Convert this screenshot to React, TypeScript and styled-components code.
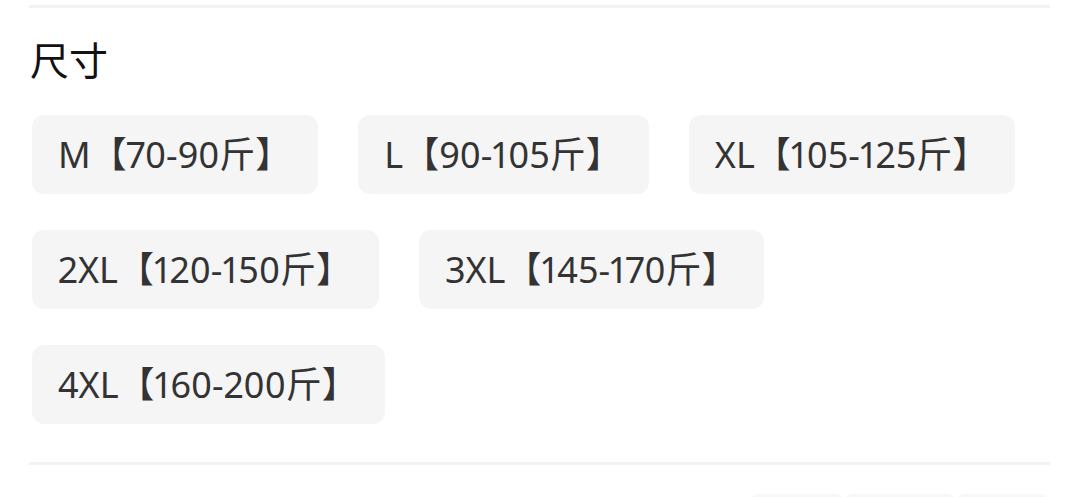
import React from "react";
import styled, { createGlobalStyle } from "styled-components";

const GlobalStyle = createGlobalStyle`
  body {
    margin: 0;
    background: #ffffff;
    font-family: "Noto Sans CJK SC", "Noto Sans", sans-serif;
  }
`;

const Page = styled.div`
  width: 1069px;
  height: 497px;
  overflow: hidden;
  padding: 5px 19px 0 29px;
  box-sizing: border-box;
`;

const Divider = styled.div`
  height: 3px;
  background: #f2f2f2;
`;

const Section = styled.div`
  padding: 30px 0 38px 1px;
`;

const Title = styled.h3`
  margin: 0 0 37px;
  font-size: 39px;
  font-weight: 400;
  line-height: 40px;
  color: #111111;
`;

const Options = styled.div`
  display: flex;
  flex-wrap: wrap;
  column-gap: 40px;
  row-gap: 36px;
  width: 1010px;
  margin-left: 2px;
`;

const Chip = styled.button<{ $active?: boolean }>`
  display: flex;
  align-items: center;
  height: 79px;
  padding: 0 27px 0 26px;
  border: none;
  border-radius: 12px;
  background: ${(p) => (p.$active ? "#fff0ee" : "#f5f5f5")};
  color: ${(p) => (p.$active ? "#ff4a2e" : "#333333")};
  font-family: "Noto Sans", "Noto Sans CJK SC", sans-serif;
  font-size: 36px;
  font-variant-numeric: proportional-nums;
  line-height: 1;
  cursor: pointer;
`;

const Footer = styled.div`
  display: flex;
  justify-content: flex-end;
  gap: 4px;
  padding: 29px 4px 0 0;
`;

const Ghost = styled.div<{ $w: number }>`
  width: ${(p) => p.$w}px;
  height: 12px;
  border-radius: 6px 6px 0 0;
  background: #f7f7f7;
`;

const sizes = [
  "M【70-90斤】",
  "L【90-105斤】",
  "XL【105-125斤】",
  "2XL【120-150斤】",
  "3XL【145-170斤】",
  "4XL【160-200斤】",
];

export default function App() {
  return (
    <>
      <GlobalStyle />
      <Page>
        <Divider />
        <Section>
          <Title>尺寸</Title>
          <Options>
            {sizes.map((s) => (
              <Chip key={s}>{s}</Chip>
            ))}
          </Options>
        </Section>
        <Divider />
        <Footer>
          <Ghost $w={90} />
          <Ghost $w={108} />
          <Ghost $w={88} />
        </Footer>
      </Page>
    </>
  );
}
